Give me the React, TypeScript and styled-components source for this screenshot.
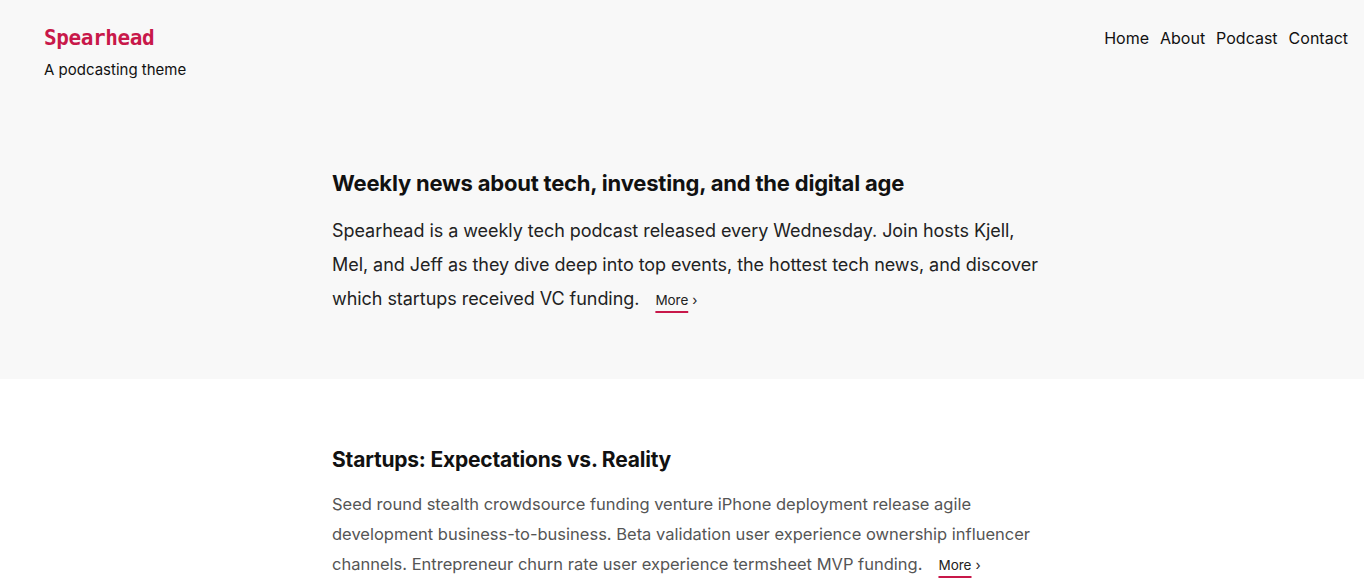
import * as React from 'react';
import styled, { createGlobalStyle } from 'styled-components';

const COLORS = {
  brand: '#c8184a',
  ink: '#111',
  body: '#222',
  muted: '#555',
  tint: '#f8f8f8',
  white: '#fff',
};

const FONT = `Inter, "Noto Sans", sans-serif`;

const GlobalStyle = createGlobalStyle`
  html, body {
    margin: 0;
    padding: 0;
    background: ${COLORS.white};
    font-family: ${FONT};
    color: ${COLORS.body};
    -webkit-font-smoothing: antialiased;
  }
`;

const episodes = [
  {
    title: 'Startups: Expectations vs. Reality',
    text:
      'Seed round stealth crowdsource funding venture iPhone deployment release agile development business-to-business. Beta validation user experience ownership influencer channels. Entrepreneur churn rate user experience termsheet MVP funding.',
  },
];

const MoreLink = () => (
  <More href="#">
    <MoreLabel>More</MoreLabel>
    <Arrow>›</Arrow>
  </More>
);

const App = () => (
  <>
    <GlobalStyle />
    <Hero>
      <Header>
        <Branding>
          <SiteTitle href="#">Spearhead</SiteTitle>
          <Tagline>A podcasting theme</Tagline>
        </Branding>
        <Nav>
          <NavLink href="#">Home</NavLink>
          <NavLink href="#">About</NavLink>
          <NavLink href="#">Podcast</NavLink>
          <NavLink href="#">Contact</NavLink>
        </Nav>
      </Header>
      <Column>
        <IntroTitle>Weekly news about tech, investing, and the digital age</IntroTitle>
        <IntroText>
          Spearhead is a weekly tech podcast released every Wednesday. Join hosts Kjell, Mel,
          and Jeff as they dive deep into top events, the hottest tech news, and discover which
          startups received VC funding.
          <MoreLink />
        </IntroText>
      </Column>
    </Hero>
    <Main>
      {episodes.map((ep) => (
        <Column key={ep.title}>
          <PostTitle>{ep.title}</PostTitle>
          <PostText>
            {ep.text}
            <MoreLink />
          </PostText>
        </Column>
      ))}
    </Main>
  </>
);

const Hero = styled.section`
  background: ${COLORS.tint};
  padding-bottom: 62px;
`;

const Header = styled.header`
  display: flex;
  justify-content: space-between;
  align-items: flex-start;
  padding: 24px 16px 0 44px;
`;

const Branding = styled.div`
  display: flex;
  flex-direction: column;
`;

const SiteTitle = styled.a`
  font-family: "DejaVu Sans Mono", "Liberation Mono", monospace;
  font-weight: 700;
  font-size: 21px;
  line-height: 28px;
  color: ${COLORS.brand};
  text-decoration: none;
  letter-spacing: -0.4px;
`;

const Tagline = styled.p`
  margin: 7px 0 0;
  font-size: 15px;
  line-height: 22px;
  color: ${COLORS.ink};
`;

const Nav = styled.nav`
  display: flex;
  gap: 11px;
`;

const NavLink = styled.a`
  font-size: 16px;
  line-height: 28px;
  color: ${COLORS.ink};
  text-decoration: none;
`;

const Column = styled.div`
  width: 720px;
  padding-left: 20px;
  margin: 0 auto;
`;

const IntroTitle = styled.h1`
  margin: 87px 0 0;
  font-size: 22px;
  line-height: 30px;
  font-weight: 700;
  color: ${COLORS.ink};
  letter-spacing: -0.2px;
`;

const IntroText = styled.p`
  margin: 16px 0 0;
  font-size: 18px;
  line-height: 34px;
  color: ${COLORS.body};
  letter-spacing: -0.05px;
`;

const More = styled.a`
  margin-left: 16px;
  font-size: 13.5px;
  color: ${COLORS.body};
  text-decoration: none;
  white-space: nowrap;
`;

const MoreLabel = styled.span`
  text-decoration: underline;
  text-decoration-color: ${COLORS.brand};
  text-decoration-thickness: 1.5px;
  text-underline-offset: 6px;
`;

const Arrow = styled.span`
  margin-left: 4px;
`;

const Main = styled.main`
  background: ${COLORS.white};
`;

const PostTitle = styled.h2`
  margin: 66px 0 0;
  font-size: 21px;
  line-height: 30px;
  font-weight: 700;
  color: ${COLORS.ink};
  letter-spacing: -0.2px;
`;

const PostText = styled.p`
  margin: 14px 0 0;
  font-size: 16.5px;
  line-height: 30px;
  color: ${COLORS.muted};
`;

export default App;
